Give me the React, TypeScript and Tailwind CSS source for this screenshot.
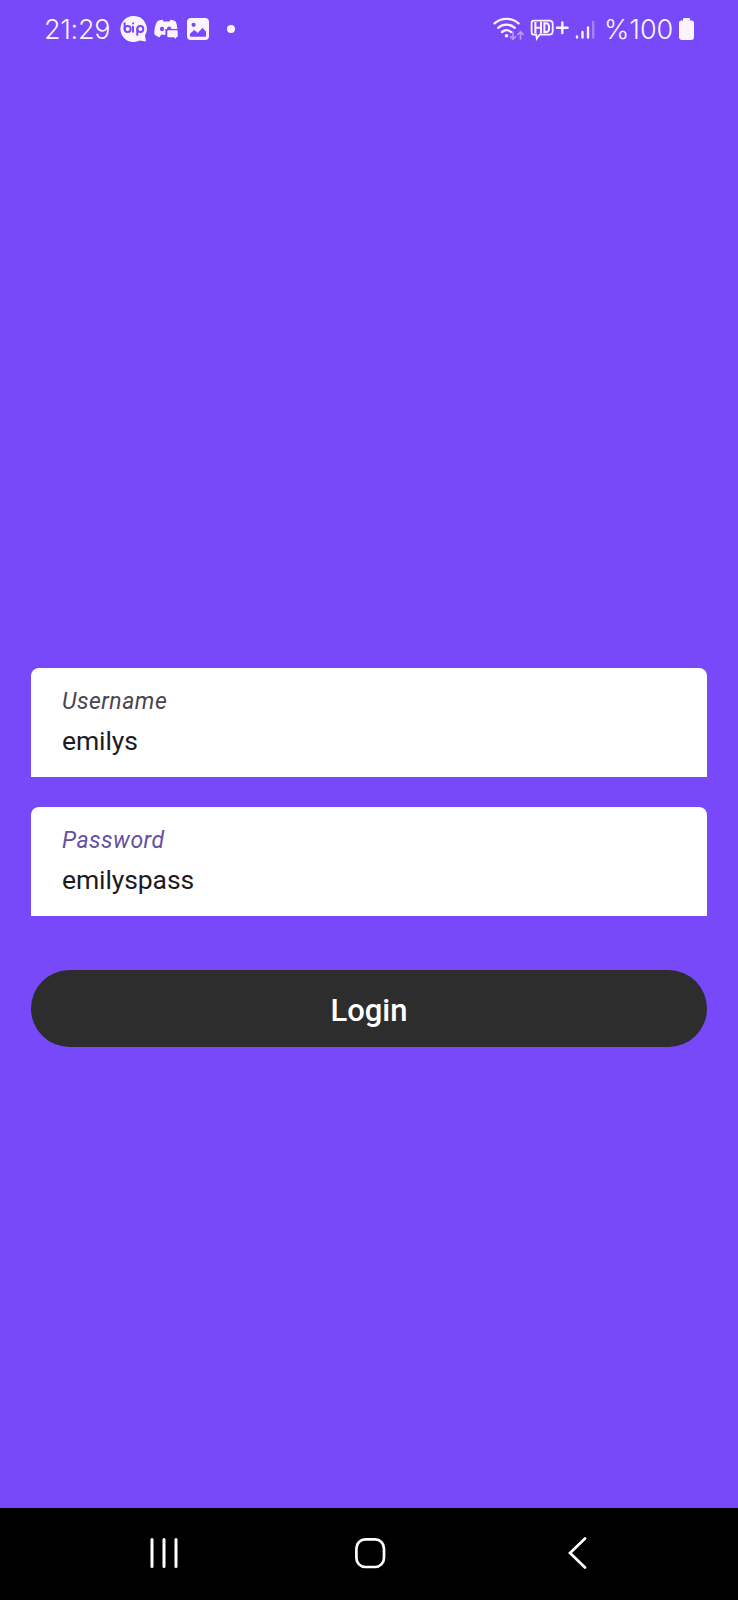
import React from "react";

function BipIcon() {
  return (
    <svg className="ml-2 h-7 w-7 shrink-0" viewBox="0 0 28 28" fill="none">
      <path d="M13.5 1a13 13 0 1 0 6.2 24.4L26 26.6l-1-6A13 13 0 0 0 13.5 1Z" fill="#fbf4ff" />
      <g stroke="#7849f9" strokeWidth="2" strokeLinecap="round">
        <path d="M4.6 8.3v6" />
        <circle cx="7.6" cy="14" r="3" />
        <path d="M13 11.7v5.1M17.3 14v6" />
        <circle cx="20.3" cy="14" r="3" />
        <path d="M13 8.3v.1" />
      </g>
    </svg>
  );
}

function DiscordIcon() {
  return (
    <svg className="ml-[6px] h-6 w-6 shrink-0" viewBox="0 0 24 24">
      <path
        d="M9.5 4.6 8.6 2.8C6.4 3 4.6 3.5 3.3 4.3 1.1 8 .1 12 .4 17.2c1.8 1.7 3.5 2.6 5.3 3.1l1.5-2.8q2.4.6 4.2.3V12h12c-.3-3-.7-5.6-1.9-7.7-1.4-.8-2.8-1.3-5-1.5l-.9 1.8q-3-.3-6.1 0Z"
        fill="#fbf4ff"
      />
      <ellipse cx="8" cy="12" rx="2.1" ry="2.3" fill="#7849f9" />
      <path d="M12 18.5v-5.2q0-1.4 1-1.4c.2-1.7 1-2.5 2.2-2.5s2 .8 2.2 2.5H24v6.6Z" fill="#7849f9" />
      <path d="M14.3 13.2h8.4q1 0 1 1v5q0 1-1 1h-.8V22l-2.1-1.8h-5.5q-1 0-1-1v-5q0-1 1-1Z" fill="#fbf4ff" />
    </svg>
  );
}

function PictureIcon() {
  return (
    <svg className="ml-[9px] h-[22px] w-[22px] shrink-0" viewBox="0 0 22 22">
      <rect width="22" height="22" rx="4" fill="#fbf4ff" />
      <circle cx="6.6" cy="6.8" r="2.1" fill="#7849f9" />
      <path d="M3 18v-2.3l4.2-3.6 3.6 3 4.7-5.3 3.6 4V18q0 .7-.7.7H3.7Q3 18.7 3 18Z" fill="#7849f9" />
    </svg>
  );
}

function WifiIcon() {
  return (
    <svg className="h-6 w-8 shrink-0" viewBox="0 0 32 24" fill="none" strokeLinecap="round">
      <g stroke="#fbf4ff" strokeWidth="2.3">
        <path d="M2.5 6.4c6.6-6.1 17.4-6.1 24 0M6.2 10.8c4.7-4.2 11.9-4.2 16.6 0M10 15c2.7-2.2 6.3-2.2 9 0" />
      </g>
      <circle cx="14.5" cy="18.7" r="1.8" fill="#fbf4ff" />
      <path
        d="M21 15v7m-2.5-2.3L21 22.2l2.5-2.5M28.5 22v-7M26 17.3l2.5-2.5 2.5 2.5"
        stroke="#b997ff"
        strokeWidth="1.7"
      />
    </svg>
  );
}

function HdIcon() {
  return (
    <svg className="ml-[6px] h-6 w-10 shrink-0" viewBox="0 0 40 24" fill="none" stroke="#fbf4ff">
      <path
        d="M4 3.6h15.3q3.4 0 3.4 3.4v7.2q0 3.4-3.4 3.4H9.6L6.8 21.6 6.2 17.6H4q-2.4 0-2.4-2.4V6Q1.6 3.6 4 3.6Z"
        strokeWidth="1.8"
      />
      <path d="M5.4 5v11.5M11 5v11.5M5.4 10.7H11M14.4 6.3v8.8h1.5q3.2 0 3.2-4.4t-3.2-4.4Z" strokeWidth="2.1" />
      <path d="M27 10.7h10.6M32.3 5.4V16" strokeWidth="2.4" strokeLinecap="round" />
    </svg>
  );
}

function SignalIcon() {
  return (
    <svg className="ml-[5px] h-5 w-5 shrink-0" viewBox="0 0 20 20" fill="none" strokeWidth="2.4" strokeLinecap="round">
      <path d="M2 17.5v1M7.5 13v5.5M13 8.5v10" stroke="#fbf4ff" />
      <path d="M18.2 3v15.5" stroke="#a77fff" />
    </svg>
  );
}

function BatteryIcon() {
  return (
    <svg className="ml-[4px] h-[22px] w-[15px] shrink-0" viewBox="0 0 15 22" fill="#fbf4ff">
      <path d="M5 0h5q1 0 1 1v1.4h1.5Q15 2.4 15 5v14q0 3-3 3H3q-3 0-3-3V5q0-2.6 2.5-2.6H4V1q0-1 1-1Z" />
    </svg>
  );
}

function StatusBar() {
  return (
    <header className="flex h-[58px] items-center justify-between px-[44px] font-[Inter,sans-serif] text-[27px] leading-none font-[350] text-[#fbf4ff]">
      <div className="flex items-center">
        <span className="w-[68px] tracking-[-0.3px]">21:29</span>
        <BipIcon />
        <DiscordIcon />
        <PictureIcon />
        <span className="ml-[18px] h-2 w-2 rounded-full bg-[#fbf4ff]" />
      </div>
      <div className="flex items-center">
        <WifiIcon />
        <HdIcon />
        <SignalIcon />
        <span className="ml-[9px] w-[71px] tracking-[0px]">%100</span>
        <BatteryIcon />
      </div>
    </header>
  );
}

type FieldProps = { label: string; value: string; labelClass: string };

function Field({ label, value, labelClass }: FieldProps) {
  return (
    <div className="flex h-[109px] flex-col rounded-t-[8px] bg-white px-[31px] pt-[18px]">
      <span className={`text-[23px] leading-[31px] tracking-[0.5px] italic ${labelClass}`}>{label}</span>
      <span className="mt-[5px] text-[26.5px] leading-[37px] tracking-[-0.1px] text-[#1c1b1f]">{value}</span>
    </div>
  );
}

function NavigationBar() {
  return (
    <nav className="flex h-[92px] items-center bg-black pb-[2px] pl-[148px] text-white">
      <svg className="h-8 w-8" viewBox="0 0 32 32" stroke="currentColor" strokeWidth="3" strokeLinecap="round">
        <path d="M4 2.5v27M16 2.5v27M28 2.5v27" />
      </svg>
      <svg className="ml-[174px] h-8 w-8" viewBox="0 0 32 32" fill="none" stroke="currentColor" strokeWidth="2.7">
        <rect x="2.4" y="2.4" width="27.6" height="27.6" rx="9" />
      </svg>
      <svg
        className="ml-[180px] h-8 w-6"
        viewBox="0 0 24 32"
        fill="none"
        stroke="currentColor"
        strokeWidth="2.7"
        strokeLinecap="round"
      >
        <path d="M19 1.5 4 16l15 14.5" />
      </svg>
    </nav>
  );
}

export default function App() {
  return (
    <div className="flex h-[1600px] w-[738px] flex-col bg-[#7849f9] font-[Roboto,sans-serif]">
      <StatusBar />
      <main className="flex flex-1 flex-col px-[31px] pt-[610px]">
        <Field label="Username" value="emilys" labelClass="text-[#49454f]" />
        <div className="mt-[30px]">
          <Field label="Password" value="emilyspass" labelClass="text-[#6750a4]" />
        </div>
        <button className="mt-[54px] h-[77px] rounded-full bg-[#2d2d2d] pt-[5px] text-[31px] font-medium text-white">
          Login
        </button>
      </main>
      <NavigationBar />
    </div>
  );
}
